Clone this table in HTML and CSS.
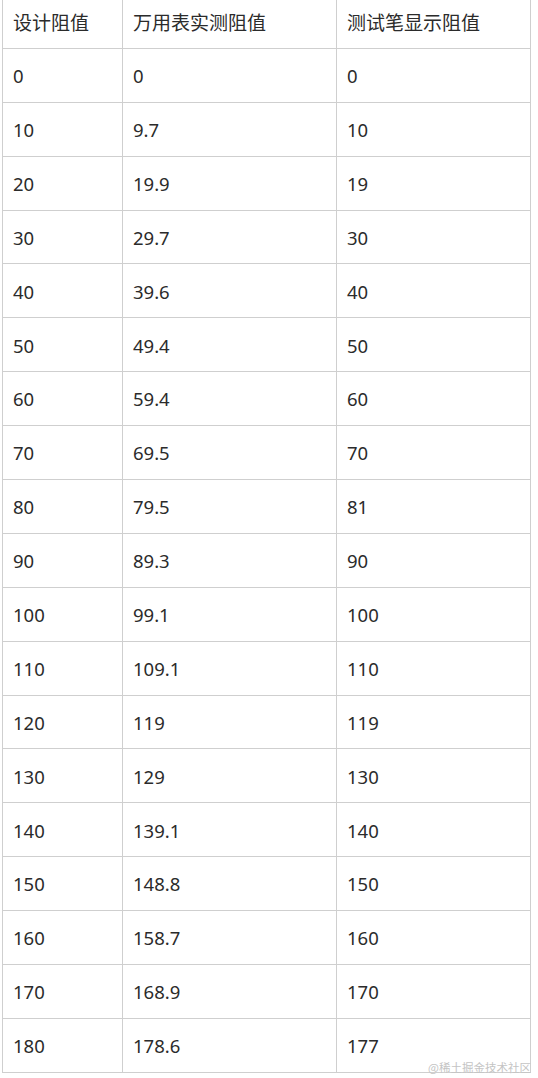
FILE: index.html
```html
<!DOCTYPE html>
<html lang="zh">
<head>
<meta charset="utf-8">
<link rel="stylesheet" href="styles.css">
</head>
<body>
<div class="page">
<table class="data">
<thead>
<tr><th class="c1">设计阻值</th><th class="c2">万用表实测阻值</th><th class="c3">测试笔显示阻值</th></tr>
</thead>
<tbody>
<tr><td>0</td><td>0</td><td>0</td></tr>
<tr><td>10</td><td>9.7</td><td>10</td></tr>
<tr><td>20</td><td>19.9</td><td>19</td></tr>
<tr><td>30</td><td>29.7</td><td>30</td></tr>
<tr><td>40</td><td>39.6</td><td>40</td></tr>
<tr><td>50</td><td>49.4</td><td>50</td></tr>
<tr><td>60</td><td>59.4</td><td>60</td></tr>
<tr><td>70</td><td>69.5</td><td>70</td></tr>
<tr><td>80</td><td>79.5</td><td>81</td></tr>
<tr><td>90</td><td>89.3</td><td>90</td></tr>
<tr><td>100</td><td>99.1</td><td>100</td></tr>
<tr><td>110</td><td>109.1</td><td>110</td></tr>
<tr><td>120</td><td>119</td><td>119</td></tr>
<tr><td>130</td><td>129</td><td>130</td></tr>
<tr><td>140</td><td>139.1</td><td>140</td></tr>
<tr><td>150</td><td>148.8</td><td>150</td></tr>
<tr><td>160</td><td>158.7</td><td>160</td></tr>
<tr><td>170</td><td>168.9</td><td>170</td></tr>
<tr><td>180</td><td>178.6</td><td>177</td></tr>
</tbody>
</table>
<div class="watermark">@稀土掘金技术社区</div>
</div>
</body>
</html>
```
FILE: styles.css
```css
html, body {
  margin: 0;
  padding: 0;
  background: #fff;
}
.page {
  position: relative;
  width: 538px;
  height: 1078px;
  overflow: hidden;
}
.data {
  border-collapse: collapse;
  margin: -6px 0 0 2px;
  width: 528px;
  table-layout: fixed;
  font-family: "Noto Sans", "Noto Sans CJK SC", sans-serif;
  font-size: 18.5px;
  color: #2b2b2b;
}
.data th, .data td {
  border: 1px solid #cfcfcf;
  height: 53.9px;
  box-sizing: border-box;
  padding: 0 10px;
  text-align: left;
  font-weight: normal;
  vertical-align: middle;
  line-height: 1;
}
.data td {
  padding-top: 2px;
}
.data th {
  font-family: "Noto Sans CJK SC", sans-serif;
  font-size: 19px;
}
.data .c1 { width: 120px; }
.data .c2 { width: 214px; }
.data .c3 { width: 194px; }
.watermark {
  position: absolute;
  right: 7px;
  bottom: 3px;
  font-family: "Noto Sans CJK SC", sans-serif;
  font-size: 11.5px;
  color: #c4c4c4;
}
```
